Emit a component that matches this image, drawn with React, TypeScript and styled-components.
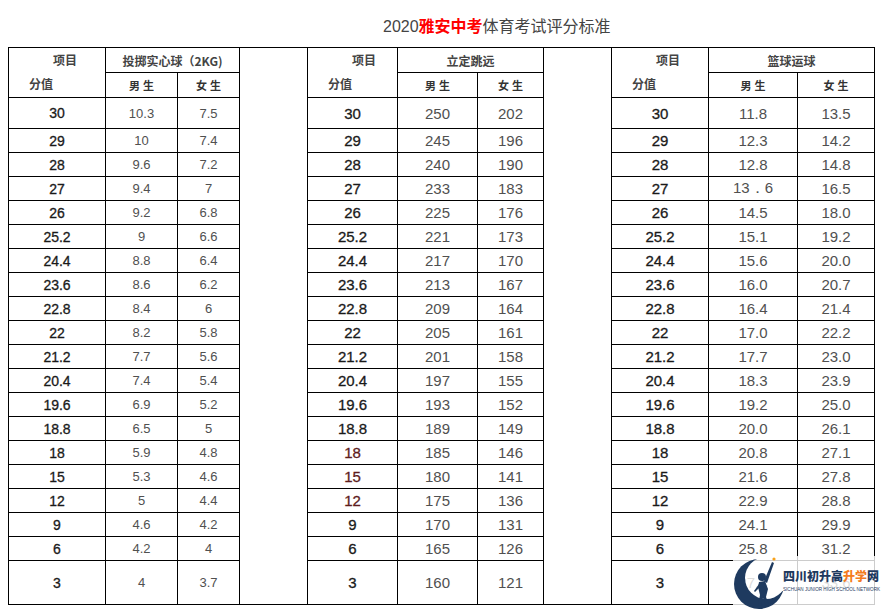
import React from 'react';
import styled, { createGlobalStyle } from 'styled-components';

const GlobalStyle = createGlobalStyle`
  html, body {
    margin: 0;
    padding: 0;
    background: #fff;
  }
  body {
    font-family: "Liberation Sans", Arial, sans-serif;
  }
`;

const Page = styled.div`
  position: relative;
  width: 884px;
  height: 610px;
  overflow: hidden;
  background: #fff;
`;

const Title = styled.h1`
  margin: 0;
  height: 47px;
  box-sizing: border-box;
  padding: 17px 0 0 383px;
  font-family: "Liberation Sans", "Noto Sans CJK SC", sans-serif;
  font-size: 16px;
  line-height: 20px;
  font-weight: normal;
  color: #444;
  white-space: nowrap;
`;

const Red = styled.span`
  color: #ff0000;
  font-weight: bold;
`;

const TableWrap = styled.div`
  padding-left: 8px;
`;

const Grid = styled.table`
  border-collapse: collapse;
  table-layout: fixed;
  width: 866px;
`;

const Row = styled.tr<{ $h: number }>`
  height: ${p => p.$h}px;
`;

const Cell = styled.td`
  border: 1px solid #000;
  padding: 0;
  text-align: center;
  vertical-align: middle;
  white-space: nowrap;
`;

const HeadCell = styled(Cell)`
  vertical-align: top;
  text-align: left;
  font-family: "Noto Sans CJK SC", sans-serif;
  font-size: 12px;
  font-weight: 700;
  color: #444;
`;

const HeadLabel = styled.div<{ $indent: number }>`
  height: 24px;
  line-height: 24px;
  padding-left: ${p => p.$indent}px;
`;

const EventCell = styled(Cell)`
  font-family: "Noto Sans CJK SC", sans-serif;
  font-size: 12px;
  font-weight: 700;
  color: #444;
`;

const SexCell = styled(Cell)`
  font-family: "Noto Sans CJK SC", sans-serif;
  font-size: 11px;
  font-weight: 700;
  color: #333;
  letter-spacing: 3px;
  padding-left: 3px;
`;

const GapCell = styled(Cell)``;

const ScoreCell = styled(Cell)<{ $size: number; $tint?: boolean }>`
  font-family: "Liberation Sans", sans-serif;
  font-size: ${p => p.$size}px;
  font-weight: normal;
  color: ${p => (p.$tint ? '#5e1c1c' : '#1a1a1a')};
  -webkit-text-stroke: 0.3px ${p => (p.$tint ? '#5e1c1c' : '#1a1a1a')};
`;

const ValueCell = styled(Cell)<{ $size: number }>`
  font-family: "Liberation Sans", sans-serif;
  font-size: ${p => p.$size}px;
  color: #505050;
`;

const Mark = styled.div`
  position: absolute;
  right: 0;
  bottom: 0;
  width: 151px;
  height: 54px;
  background: rgba(255, 255, 255, 0.8);
  display: flex;
  align-items: center;
`;

const MarkText = styled.div`
  display: flex;
  flex-direction: column;
  margin-top: -6px;
`;

const MarkName = styled.div`
  font-family: "Noto Sans CJK SC", sans-serif;
  font-size: 12px;
  line-height: 14px;
  font-weight: 900;
  color: #1e3a5f;
  white-space: nowrap;
`;

const Orange = styled.span`
  color: #f47b20;
`;

const MarkSub = styled.div`
  margin-top: 4px;
  font-family: "Liberation Sans", sans-serif;
  font-size: 4.6px;
  line-height: 5px;
  color: #1e3a5f;
  white-space: nowrap;
`;

type Line = [string, string, string, string, string, string, string];

const data: Line[] = [
  ['30', '10.3', '7.5', '250', '202', '11.8', '13.5'],
  ['29', '10', '7.4', '245', '196', '12.3', '14.2'],
  ['28', '9.6', '7.2', '240', '190', '12.8', '14.8'],
  ['27', '9.4', '7', '233', '183', '13．6', '16.5'],
  ['26', '9.2', '6.8', '225', '176', '14.5', '18.0'],
  ['25.2', '9', '6.6', '221', '173', '15.1', '19.2'],
  ['24.4', '8.8', '6.4', '217', '170', '15.6', '20.0'],
  ['23.6', '8.6', '6.2', '213', '167', '16.0', '20.7'],
  ['22.8', '8.4', '6', '209', '164', '16.4', '21.4'],
  ['22', '8.2', '5.8', '205', '161', '17.0', '22.2'],
  ['21.2', '7.7', '5.6', '201', '158', '17.7', '23.0'],
  ['20.4', '7.4', '5.4', '197', '155', '18.3', '23.9'],
  ['19.6', '6.9', '5.2', '193', '152', '19.2', '25.0'],
  ['18.8', '6.5', '5', '189', '149', '20.0', '26.1'],
  ['18', '5.9', '4.8', '185', '146', '20.8', '27.1'],
  ['15', '5.3', '4.6', '180', '141', '21.6', '27.8'],
  ['12', '5', '4.4', '175', '136', '22.9', '28.8'],
  ['9', '4.6', '4.2', '170', '131', '24.1', '29.9'],
  ['6', '4.2', '4', '165', '126', '25.8', '31.2'],
  ['3', '4', '3.7', '160', '121', '27.4', '33.6'],
];

const widths = [97, 72, 62, 68, 90, 80, 66, 68, 97, 89, 77];
const tinted = ['18', '15', '12'];

const rowHeight = (i: number) => (i === 0 ? 31 : i === data.length - 1 ? 44 : 24);

const HeadPair = () => (
  <HeadCell rowSpan={2}>
    <HeadLabel $indent={44}>项目</HeadLabel>
    <HeadLabel $indent={20}>分值</HeadLabel>
  </HeadCell>
);

const Logo = () => (
  <svg width="50" height="54" viewBox="0 0 50 54">
    <defs>
      <mask id="moon">
        <rect x="0" y="0" width="50" height="54" fill="#fff" />
        <circle cx="33" cy="22" r="21" fill="#000" />
      </mask>
    </defs>
    <circle cx="26" cy="28" r="25" fill="#1e3a5f" mask="url(#moon)" />
    <circle cx="41" cy="3" r="1.6" fill="#f7a21b" />
    <g fill="#1e3a5f">
      <circle cx="29" cy="21" r="4" />
      <path d="M26 26 L32 25 L35 33 L33 41 L36 49 L33 50 L30 42 L28 50 L25 49 L27 39 L25 31 Z" />
      <path d="M31 25 L39 6 L41 7 L34 27 Z" />
      <path d="M26 28 L21 35 L22 36 L28 30 Z" />
    </g>
  </svg>
);

export default function App() {
  return (
    <Page>
      <GlobalStyle />
      <Title>
        2020<Red>雅安中考</Red>体育考试评分标准
      </Title>
      <TableWrap>
        <Grid>
          <colgroup>
            {widths.map((w, i) => (
              <col key={i} style={{ width: w }} />
            ))}
          </colgroup>
          <tbody>
            <Row $h={25}>
              <HeadPair />
              <EventCell colSpan={2}>投掷实心球（2KG)</EventCell>
              <GapCell rowSpan={22} />
              <HeadPair />
              <EventCell colSpan={2}>立定跳远</EventCell>
              <GapCell rowSpan={22} />
              <HeadPair />
              <EventCell colSpan={2}>篮球运球</EventCell>
            </Row>
            <Row $h={25}>
              <SexCell>男生</SexCell>
              <SexCell>女生</SexCell>
              <SexCell>男生</SexCell>
              <SexCell>女生</SexCell>
              <SexCell>男生</SexCell>
              <SexCell>女生</SexCell>
            </Row>
            {data.map((r, i) => (
              <Row key={r[0]} $h={rowHeight(i)}>
                <ScoreCell $size={14}>{r[0]}</ScoreCell>
                <ValueCell $size={13}>{r[1]}</ValueCell>
                <ValueCell $size={13}>{r[2]}</ValueCell>
                <ScoreCell $size={15} $tint={tinted.includes(r[0])}>{r[0]}</ScoreCell>
                <ValueCell $size={15}>{r[3]}</ValueCell>
                <ValueCell $size={15}>{r[4]}</ValueCell>
                <ScoreCell $size={15}>{r[0]}</ScoreCell>
                <ValueCell $size={15}>{r[5]}</ValueCell>
                <ValueCell $size={15}>{r[6]}</ValueCell>
              </Row>
            ))}
          </tbody>
        </Grid>
      </TableWrap>
      <Mark>
        <Logo />
        <MarkText>
          <MarkName>
            四川初升高<Orange>升学</Orange>网
          </MarkName>
          <MarkSub>SICHUAN JUNIOR HIGH SCHOOL NETWORK</MarkSub>
        </MarkText>
      </Mark>
    </Page>
  );
}
